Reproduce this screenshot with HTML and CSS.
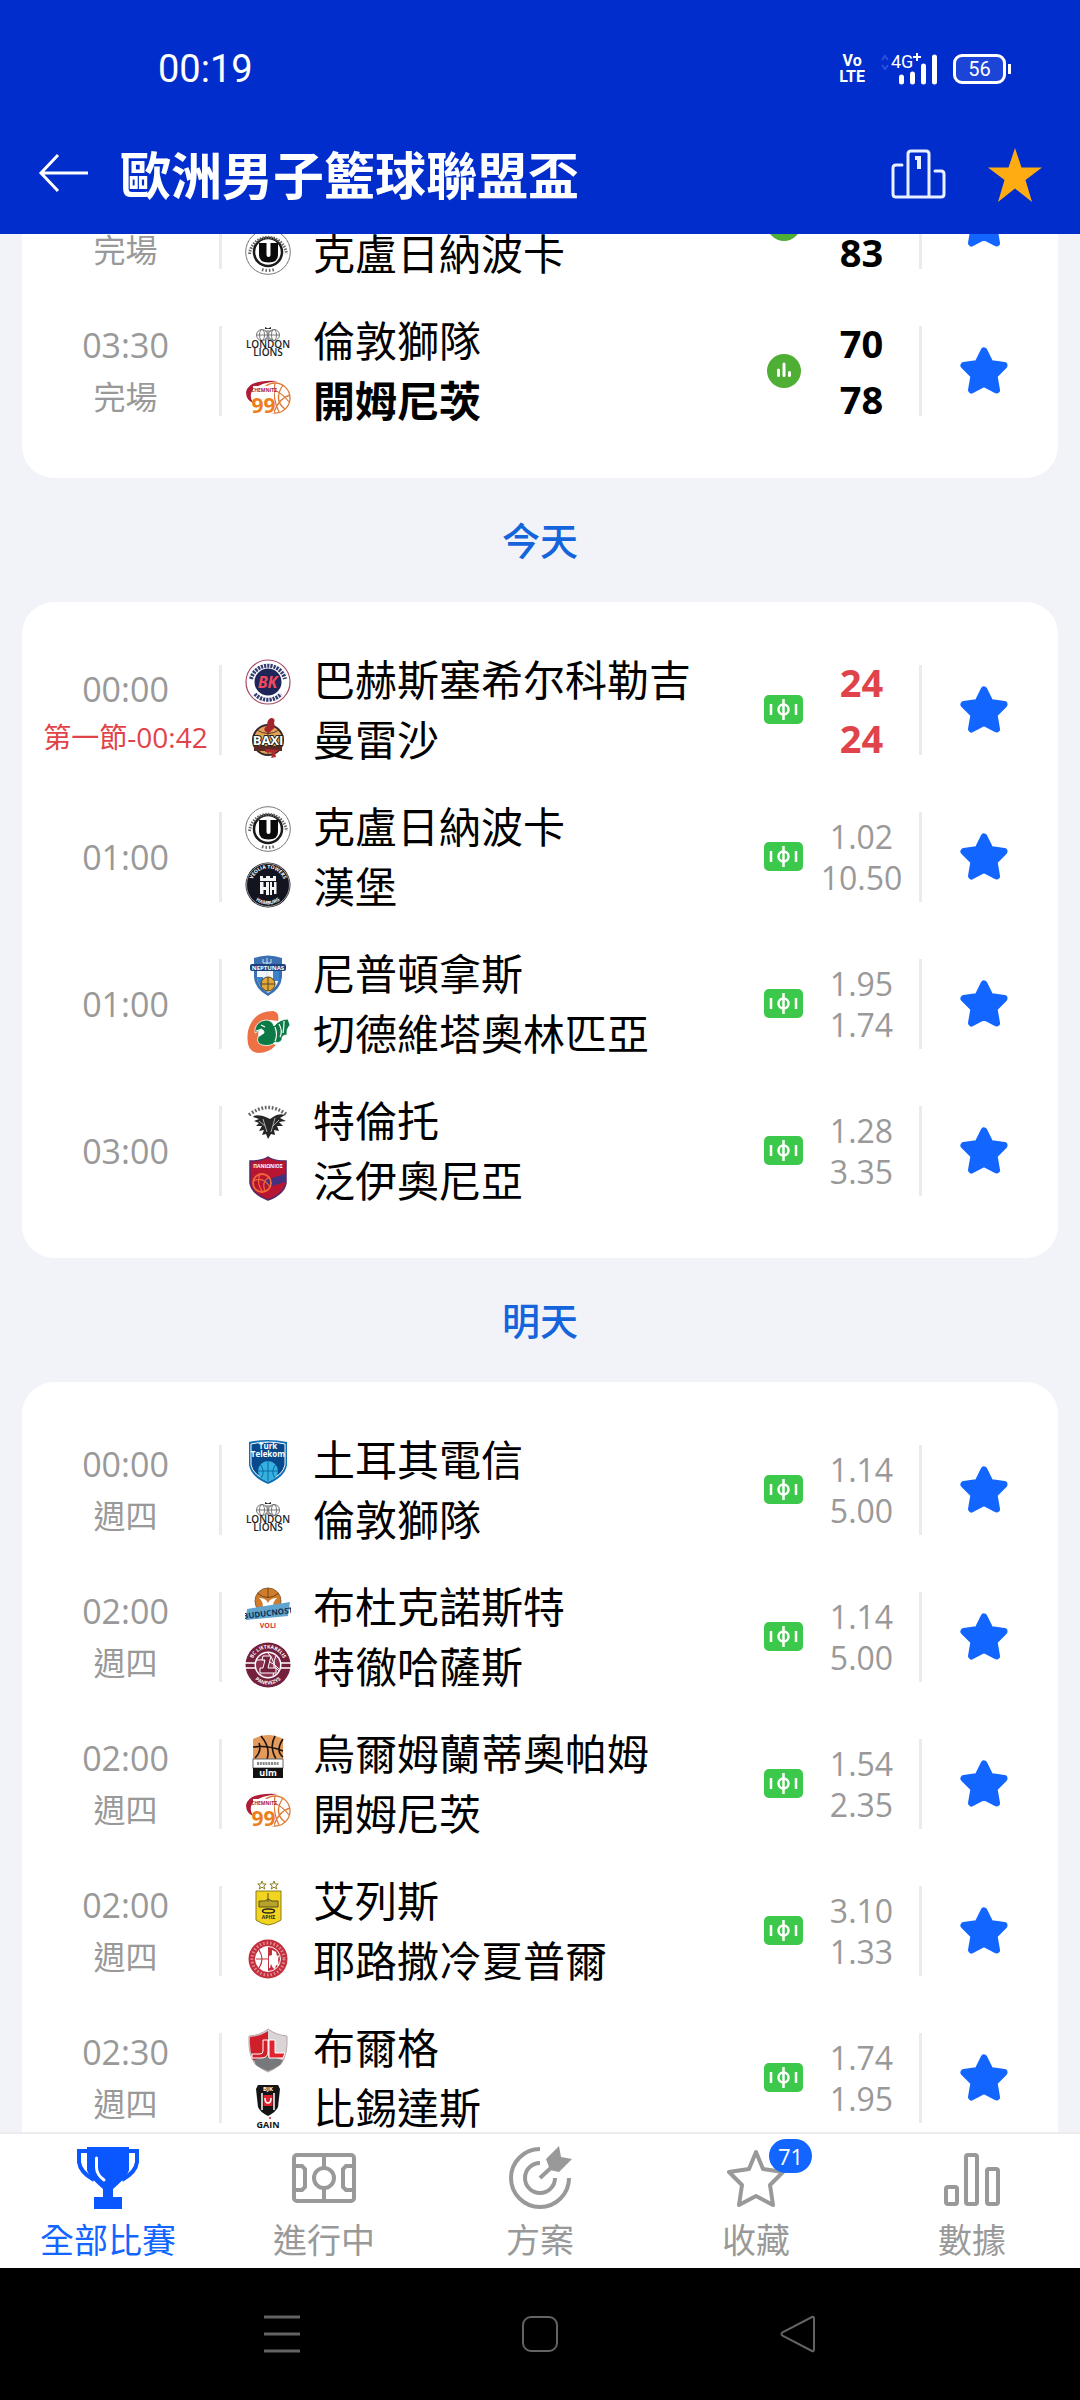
FILE: index.html
```html
<!DOCTYPE html>
<html lang="zh-Hant">
<head>
<meta charset="utf-8">
<meta name="viewport" content="width=device-width, initial-scale=1">
<title>歐洲男子籃球聯盟盃</title>
<link rel="stylesheet" href="styles.css">
</head>
<body>

<svg class="sprite" aria-hidden="true">
  <defs>
    <path id="ring-top" d="M6.5 23a16.5 16.5 0 0 1 33 0"/>
    <path id="ring-bottom" d="M3.5 23a19.5 19.5 0 0 0 39 0"/>

    <symbol id="star" viewBox="0 0 48 48">
      <path d="M24 4L30.200 16.500L44 18.500L34 28.500L36.500 43L24 36.500L11.500 43L14 28.500L4 18.500L17.800 16.500Z" fill="#1266ff" stroke="#1266ff" stroke-width="7" stroke-linejoin="round"/>
    </symbol>

    <symbol id="market" viewBox="0 0 39 29">
      <rect width="39" height="29" rx="5" fill="#3cc84a"/>
      <g fill="none" stroke="#fff" stroke-width="2.500">
        <circle cx="19.500" cy="14.500" r="5"/>
        <path d="M19.500 4V25M7 9V20M32 9V20"/>
      </g>
    </symbol>

    <symbol id="stats" viewBox="0 0 34 34">
      <circle cx="17" cy="17" r="17" fill="#4fae34"/>
      <path d="M11.500 16V21.500M17 10V21.500M22.500 18.500V21.500" stroke="#fff" stroke-width="3" stroke-linecap="round"/>
    </symbol>

    <symbol id="team-cluj" viewBox="0 0 46 46">
      <circle cx="23" cy="23" r="22.300" fill="#fff" stroke="#777" stroke-width="1"/>
      <circle cx="23" cy="23" r="14" fill="#fff" stroke="#1a1a1a" stroke-width="2.500"/>
      <path d="M14 14H21.500V26Q21.500 28 23.500 28T25.500 26V14H33V26Q33 33.500 23.500 33.500T14 26Z" fill="#0a0a0a"/>
      <g fill="none" stroke="#666" stroke-width="3">
        <path d="M4.500 25A18.600 18.600 0 0 1 41.500 25" stroke-dasharray="1.500 1.200"/>
        <path d="M17 40.500Q23 42.500 29 40.500" stroke-dasharray="1.500 2"/>
      </g>
    </symbol>

    <symbol id="team-london" viewBox="0 0 46 46">
      <g fill="none" stroke="#777" stroke-width="1">
        <circle cx="17" cy="15" r="5.500"/><circle cx="29" cy="15" r="5.500"/>
        <ellipse cx="17" cy="15" rx="2.500" ry="5.500"/><ellipse cx="29" cy="15" rx="2.500" ry="5.500"/>
        <path d="M12 15H34M20 11H27M20 19H27M23 11V20"/>
      </g>
      <path d="M20 7l3 1.500 3-1.500v2h-6z" fill="#222"/>
      <text x="23" y="28" class="t-london">LONDON</text>
      <text x="23" y="36" class="t-london">LIONS</text>
    </symbol>

    <symbol id="team-chemnitz" viewBox="0 0 46 46">
      <g fill="none" stroke="#dd7a35" stroke-width="1.300">
        <circle cx="30" cy="22" r="15"/>
        <path d="M30 7Q27 22 34 36M22 10Q38 17 44 26M45 19Q34 22 29 36M38 9Q28 24 40 33"/>
      </g>
      <path d="M33 5Q4 3 1 16Q1 24 8 27Q4 20 7 15Q13 7 33 5Z" fill="#b01c36"/>
      <rect x="8" y="10" width="21" height="27" fill="#fff"/>
      <text x="19" y="16" class="t-chem">CHEMNITZ</text>
      <text x="18.500" y="37" class="t-99">99</text>
    </symbol>

    <symbol id="team-bk" viewBox="0 0 46 46">
      <circle cx="23" cy="23" r="22" fill="#fff" stroke="#a74a66" stroke-width="1.200"/>
      <circle cx="23" cy="23" r="13.500" fill="#1d2559"/>
      <path d="M6 20A17.500 17.500 0 0 1 40 20M10 35A17.500 17.500 0 0 0 36 35" fill="none" stroke="#353c72" stroke-width="4" stroke-dasharray="2.200 1"/>
      <text x="22.500" y="29" class="t-bk">BK</text>
    </symbol>

    <symbol id="team-baxi" viewBox="0 0 46 46">
      <circle cx="23" cy="25" r="15" fill="#e3a357" stroke="#35272a" stroke-width="2"/>
      <path d="M23 10V40M12 15Q23 22 34 15M12 36Q23 29 34 36" fill="none" stroke="#5a3426"/>
      <path d="M21 17Q17 14 22 11Q22 4 26 3Q31 3 29 8Q31 13 27 15L24 18Z" fill="#a5232a"/>
      <rect x="9" y="31" width="28" height="5" fill="#5c2a22"/>
      <path d="M21 34L34 35L30 38L31 42L26 43L28 38L20 37Z" fill="#b52a30"/>
      <text x="23" y="30" class="t-baxi">BAXI</text>
    </symbol>

    <symbol id="team-towers" viewBox="0 0 46 46">
      <circle cx="23" cy="23" r="22.500" fill="#12151f"/>
      <circle cx="23" cy="23" r="21.500" fill="none" stroke="#bbb" stroke-width=".8"/>
      <text class="t-ring t-white"><textPath href="#ring-top" startOffset="50%">VEOLIA TOWERS</textPath></text>
      <text class="t-ring t-white"><textPath href="#ring-bottom" startOffset="50%">HAMBURG</textPath></text>
      <path d="M15 14h3v2h3v-2h4v2h3v-2h3v5H15zM15 20h3.500v5h2.500v-5h3v13h-3v-5h-2.500v4H15zM25 20h2v5h2v-5h2.500v12H29v-4h-2v5h-2z" fill="#f4f4f4"/>
    </symbol>

    <symbol id="team-neptunas" viewBox="0 0 46 46">
      <path d="M9 5Q23 0 37 5V24Q36 36 23 43Q10 36 9 24Z" fill="#3a6fb2"/>
      <path d="M12 18H34V25Q33 34 23 40Q13 34 12 25Z" fill="#f2f6fb"/>
      <path d="M12 24H18V33L23 40Q13 34 12 25ZM28 18H34V28H28Z" fill="#3a82cc"/>
      <path d="M22 5V25M18 6V10H26V6" stroke="#cfe0f2" fill="none"/>
      <rect x="5" y="11" width="36" height="7" rx="2" fill="#1d437f"/>
      <text x="23" y="17" class="t-nep">NEPTUNAS</text>
      <circle cx="23" cy="31" r="7" fill="#e1a83a" stroke="#5b4420"/>
      <path d="M23 24V38M16 31H30" stroke="#5b4420"/>
    </symbol>

    <symbol id="team-cedevita" viewBox="0 0 46 46">
      <path d="M28 2Q8 2 3 22Q0 43 13 44Q24 44 31 36L22 33Q16 37 14 31Q10 16 25 11L33 12Q35 3 28 2Z" fill="#ee7146"/>
      <path d="M10 20Q12 12 21 11Q27 11 29 17Q35 10 43 10L45 16Q41 20 42 26Q36 26 37 31Q34 35 30 33Q26 38 17 36Q11 34 13 28L19 24Q19 20 16 21L10 24Z" fill="#0c7a46" stroke="#fff" stroke-width=".8"/>
      <path d="M30 18Q33 26 30 32M34 15Q38 22 35 28M39 12Q39 19 38 24M16 16l4 2M11 22l6-2" stroke="#fff" stroke-width="1.200" fill="none"/>
    </symbol>

    <symbol id="team-aquila" viewBox="0 0 46 46">
      <path d="M4 15Q23 0 42 15" fill="none" stroke="#666" stroke-width="3.500" stroke-dasharray="1.800 1.700"/>
      <path d="M23 18L18 16Q10 14 8 17L14 19L9 21L14 23L11 26L17 26L14 31L19 30L17 35L21 34L23 39L26 34L30 35L29 30L34 31L32 26L38 26L34 22L41 21L35 18L40 15Q33 13 28 17L25 19Z" fill="#262626"/>
      <path d="M18 19L22 32M30 18L26 32M14 21l6 5M34 20l-6 6" stroke="#aaa" stroke-width="1"/>
    </symbol>

    <symbol id="team-panionios" viewBox="0 0 46 46">
      <path d="M5 5Q17 5 23 1Q29 5 41 5V27Q39 38 23 44Q7 38 5 27Z" fill="#b81533" stroke="#542a68" stroke-width="1.500"/>
      <path d="M17 25L40 18V26L24 31Z" fill="#43307f"/>
      <circle cx="17" cy="27" r="9" fill="none" stroke="#ef6938" stroke-width="1.800"/>
      <path d="M8 25Q18 20 25 31M15 18Q11 28 18 36M25 21Q16 25 20 35" fill="none" stroke="#ef6938" stroke-width="1.200"/>
      <text x="23" y="12" class="t-pan">ΠΑΝΙΩΝΙΟΣ</text>
    </symbol>

    <symbol id="team-telekom" viewBox="0 0 46 46">
      <path d="M4 3Q23 -1 42 3V26Q40 38 23 45Q6 38 4 26Z" fill="#0f6fb4"/>
      <path d="M6 5Q23 1 40 5V26Q38 36 23 42Q8 36 6 26Z" fill="#07498a" stroke="#fff" stroke-width="1"/>
      <circle cx="23" cy="32" r="10" fill="#35b0df"/>
      <path d="M23 22V42M13 32H33M15 25Q21 33 16 39M31 25Q25 33 30 39" fill="none" stroke="#0a6ba6"/>
      <text x="23" y="10" class="t-tt">Türk</text>
      <text x="23" y="18" class="t-tt">Telekom</text>
    </symbol>

    <symbol id="team-buducnost" viewBox="0 0 46 46">
      <circle cx="23" cy="15" r="13" fill="#cf7c2c" stroke="#8b6035"/>
      <path d="M12 7Q23 16 34 7M23 2V12" stroke="#704518" fill="none"/>
      <path d="M14 12Q21 12 23 17Q25 12 32 12Q28 15 28 21H18Q18 15 14 12Z" fill="#fff"/>
      <path d="M2 23L45 16L43 30L1 34Z" fill="#5fa3cf"/>
      <text x="23" y="30" class="t-bud" transform="rotate(-7 23 27)">BUDUCNOST</text>
      <text x="23" y="42" class="t-voli">VOLI</text>
    </symbol>

    <symbol id="team-lietkabelis" viewBox="0 0 46 46">
      <circle cx="23" cy="23" r="22.500" fill="#74203d"/>
      <path d="M0 21H46M0 26H46" stroke="#fff" stroke-width="1.300"/>
      <text class="t-ring t-white"><textPath href="#ring-top" startOffset="50%">BC LIETKABELIS</textPath></text>
      <text class="t-ring t-white"><textPath href="#ring-bottom" startOffset="50%">PANEVEZYS</textPath></text>
      <circle cx="23" cy="23" r="13.500" fill="#fff"/>
      <circle cx="23" cy="23" r="12" fill="#8b3150"/>
      <path d="M12 18Q24 16 34 27M23 11Q32 20 28 34M31 14Q26 23 34 29" fill="none" stroke="#fff"/>
      <path d="M18 14H26L23 26H31V31H15V26H18L20 18H17Z" fill="#74203d" stroke="#fff" stroke-width="1"/>
    </symbol>

    <symbol id="team-ulm" viewBox="0 0 46 46">
      <path d="M8 6Q23 -2 38 6V26H8Z" fill="#e49a5a"/>
      <path d="M16 3Q26 15 22 26M8 14Q24 12 38 18M10 25Q17 18 14 10M30 3Q24 14 31 26M38 6Q30 18 38 24" fill="none" stroke="#1a1410" stroke-width="1.600"/>
      <rect x="8" y="26" width="30" height="9" fill="#fff" stroke="#666"/>
      <path d="M12 30.500H34" stroke="#888" stroke-width="3" stroke-dasharray="2 .8"/>
      <rect x="8" y="35" width="30" height="10" fill="#111"/>
      <text x="23" y="43" class="t-ulm">ulm</text>
    </symbol>

    <symbol id="team-aris" viewBox="0 0 46 46">
      <path d="M17 1l1.200 3h3l-2.400 2 1 3-2.800-1.800L14.200 9l1-3-2.400-2h3zM29 1l1.200 3h3l-2.400 2 1 3-2.800-1.800L26.200 9l1-3-2.400-2h3z" fill="#fff" stroke="#8a7d1e" stroke-width="1"/>
      <path d="M11 11H36V40Q30 44 23.500 45Q16 44 11 40Z" fill="#f1d420" stroke="#8a7d1e"/>
      <path d="M23 13V22M14 21H20L23 19L27 21H33V27H14Z" fill="#b7a22a" stroke="#5b5220" stroke-width="1"/>
      <ellipse cx="23.500" cy="31" rx="6" ry="2" fill="none" stroke="#222" stroke-width="1.500"/>
      <text x="23.500" y="39" class="t-aris">ΑΡΗΣ</text>
    </symbol>

    <symbol id="team-hapoel" viewBox="0 0 46 46">
      <circle cx="23" cy="23" r="19.500" fill="#c32f3c"/>
      <circle cx="23" cy="23" r="16" fill="none" stroke="#e08a92" stroke-width="3" stroke-dasharray="1.500 2"/>
      <circle cx="23" cy="23" r="12.500" fill="#c32f3c" stroke="#fff" stroke-width="1"/>
      <path d="M23 10.500A12.500 12.500 0 0 0 23 35.500Z" fill="#fff"/>
      <path d="M11 23H23M14 14Q20 23 14 32" stroke="#c32f3c" stroke-width="1.200" fill="none"/>
      <path d="M27 14l4 2 1 4 2-1-1 5 1 6-3-1-1 4-2-1-2-4-1 4h-1V20l3-1z" fill="#fff"/>
    </symbol>

    <symbol id="team-bourg" viewBox="0 0 46 46">
      <path d="M4 9Q16 8 23 2Q31 8 42 9Q43 28 36 37Q30 42 23 45Q16 42 10 37Q3 28 4 9Z" fill="#d9d4d6" stroke="#b9a7aa"/>
      <path d="M5 10Q16 9 23 4V35L8 33Q4 22 5 10Z" fill="#cf1f2b"/>
      <path d="M9 33Q23 27 38 33L35 38Q29 42 23 44Q15 41 11 38Z" fill="#77787c"/>
      <path d="M18 13H23V25Q23 31 16 31H7V27H15Q18 27 18 24Z" fill="#cf1f2b" stroke="#fff"/>
      <path d="M24 13H30V26H40L38 31H24Z" fill="#e2222e" stroke="#fff"/>
    </symbol>

    <symbol id="team-besiktas" viewBox="0 0 46 46">
      <path d="M13 2H33L35 6L33 24Q31 29 23 33Q15 29 13 24L11 6Z" fill="#151515"/>
      <path d="M17 10V27M29 10V27" stroke="#fff" stroke-width="1.500"/>
      <rect x="18.500" y="12" width="9" height="11" fill="#d9232f"/>
      <path d="M20 15Q20 20 23 20T26 15" stroke="#fff" stroke-width="1.500" fill="none"/>
      <text x="23" y="8" class="t-bjk">BJK</text>
      <circle cx="25" cy="35" r="1" fill="#d9232f"/>
      <text x="23" y="45" class="t-gain">GAIN</text>
    </symbol>
  </defs>
</svg>

<header class="header">
  <div class="status">
    <span class="status-time">00:19</span>
    <div class="status-icons">
      <span class="volte">Vo<br>LTE</span>
      <svg class="signal" viewBox="0 0 56 32" aria-hidden="true">
        <path d="M1 7l3-4 3 4M1 12l3 4 3-4" fill="none" stroke="#2a50e0" stroke-width="2"/>
        <text x="10" y="15">4G</text>
        <path d="M36 0V8M32 4H40" stroke="#fff" stroke-width="2"/>
        <path d="M20.500 24V29M31.500 21V29M42.500 13V29M53.500 4V29" stroke="#fff" stroke-width="5" stroke-linecap="round"/>
      </svg>
      <span class="battery">56</span>
    </div>
  </div>
  <div class="toolbar">
    <button class="icon-button" type="button" aria-label="返回">
      <svg width="52" height="44" viewBox="0 0 52 44" aria-hidden="true"><path d="M20 2L3 20L20 38M3 20H50" fill="none" stroke="#fff" stroke-width="3"/></svg>
    </button>
    <h1 class="title">歐洲男子籃球聯盟盃</h1>
    <button class="icon-button" type="button" aria-label="排名">
      <svg width="56" height="52" viewBox="0 0 56 52" aria-hidden="true">
        <g fill="none" stroke="#e9f0ff" stroke-width="3" stroke-linejoin="round" stroke-linecap="round">
          <path d="M18 48V5Q18 2 21 2H36Q39 2 39 5V48M12 16H6Q3 16 3 19V45Q3 48 6 48H51Q54 48 54 45V25Q54 22 51 22H45"/>
          <path d="M25 9H29V20" stroke-width="4" stroke-linecap="butt" stroke-linejoin="miter"/>
        </g>
      </svg>
    </button>
    <button class="icon-button" type="button" aria-label="收藏聯賽">
      <svg width="54" height="54" viewBox="0 0 54 54" aria-hidden="true"><path d="M27 0L33.500 19.500H54L37.500 32L44 54L27 40.500L10 54L16.500 32L0 19.500H20.500Z" fill="#ffac12"/></svg>
    </button>
  </div>
</header>

<main class="scroller">
  <div class="feed">
    <ul class="card">
      <li class="match">
        <div class="when"><time></time><span>完場</span></div>
        <div class="logos"><svg></svg><svg><use href="#team-cluj"/></svg></div>
        <div class="teams"><span></span><span>克盧日納波卡</span></div>
        <svg class="stats"><use href="#stats"/></svg>
        <div class="score"><span></span><span>83</span></div>
        <button class="fav" type="button" aria-label="收藏"><svg><use href="#star"/></svg></button>
      </li>
      <li class="match">
        <div class="when"><time>03:30</time><span>完場</span></div>
        <div class="logos"><svg><use href="#team-london"/></svg><svg><use href="#team-chemnitz"/></svg></div>
        <div class="teams"><span>倫敦獅隊</span><span class="winner">開姆尼茨</span></div>
        <svg class="stats"><use href="#stats"/></svg>
        <div class="score"><span>70</span><span>78</span></div>
        <button class="fav" type="button" aria-label="收藏"><svg><use href="#star"/></svg></button>
      </li>
    </ul>

    <h2 class="day">今天</h2>
    <ul class="card">
      <li class="match">
        <div class="when when-live"><time>00:00</time><span>第一節-00:42</span></div>
        <div class="logos"><svg><use href="#team-bk"/></svg><svg><use href="#team-baxi"/></svg></div>
        <div class="teams"><span>巴赫斯塞希尔科勒吉</span><span>曼雷沙</span></div>
        <svg class="market"><use href="#market"/></svg>
        <div class="score score-live"><span>24</span><span>24</span></div>
        <button class="fav" type="button" aria-label="收藏"><svg><use href="#star"/></svg></button>
      </li>
      <li class="match">
        <div class="when"><time>01:00</time></div>
        <div class="logos"><svg><use href="#team-cluj"/></svg><svg><use href="#team-towers"/></svg></div>
        <div class="teams"><span>克盧日納波卡</span><span>漢堡</span></div>
        <svg class="market"><use href="#market"/></svg>
        <div class="odds"><span>1.02</span><span>10.50</span></div>
        <button class="fav" type="button" aria-label="收藏"><svg><use href="#star"/></svg></button>
      </li>
      <li class="match">
        <div class="when"><time>01:00</time></div>
        <div class="logos"><svg><use href="#team-neptunas"/></svg><svg><use href="#team-cedevita"/></svg></div>
        <div class="teams"><span>尼普頓拿斯</span><span>切德維塔奧林匹亞</span></div>
        <svg class="market"><use href="#market"/></svg>
        <div class="odds"><span>1.95</span><span>1.74</span></div>
        <button class="fav" type="button" aria-label="收藏"><svg><use href="#star"/></svg></button>
      </li>
      <li class="match">
        <div class="when"><time>03:00</time></div>
        <div class="logos"><svg><use href="#team-aquila"/></svg><svg><use href="#team-panionios"/></svg></div>
        <div class="teams"><span>特倫托</span><span>泛伊奧尼亞</span></div>
        <svg class="market"><use href="#market"/></svg>
        <div class="odds"><span>1.28</span><span>3.35</span></div>
        <button class="fav" type="button" aria-label="收藏"><svg><use href="#star"/></svg></button>
      </li>
    </ul>

    <h2 class="day">明天</h2>
    <ul class="card">
      <li class="match">
        <div class="when"><time>00:00</time><span>週四</span></div>
        <div class="logos"><svg><use href="#team-telekom"/></svg><svg><use href="#team-london"/></svg></div>
        <div class="teams"><span>土耳其電信</span><span>倫敦獅隊</span></div>
        <svg class="market"><use href="#market"/></svg>
        <div class="odds"><span>1.14</span><span>5.00</span></div>
        <button class="fav" type="button" aria-label="收藏"><svg><use href="#star"/></svg></button>
      </li>
      <li class="match">
        <div class="when"><time>02:00</time><span>週四</span></div>
        <div class="logos"><svg><use href="#team-buducnost"/></svg><svg><use href="#team-lietkabelis"/></svg></div>
        <div class="teams"><span>布杜克諾斯特</span><span>特徹哈薩斯</span></div>
        <svg class="market"><use href="#market"/></svg>
        <div class="odds"><span>1.14</span><span>5.00</span></div>
        <button class="fav" type="button" aria-label="收藏"><svg><use href="#star"/></svg></button>
      </li>
      <li class="match">
        <div class="when"><time>02:00</time><span>週四</span></div>
        <div class="logos"><svg><use href="#team-ulm"/></svg><svg><use href="#team-chemnitz"/></svg></div>
        <div class="teams"><span>烏爾姆蘭蒂奧帕姆</span><span>開姆尼茨</span></div>
        <svg class="market"><use href="#market"/></svg>
        <div class="odds"><span>1.54</span><span>2.35</span></div>
        <button class="fav" type="button" aria-label="收藏"><svg><use href="#star"/></svg></button>
      </li>
      <li class="match">
        <div class="when"><time>02:00</time><span>週四</span></div>
        <div class="logos"><svg><use href="#team-aris"/></svg><svg><use href="#team-hapoel"/></svg></div>
        <div class="teams"><span>艾列斯</span><span>耶路撒冷夏普爾</span></div>
        <svg class="market"><use href="#market"/></svg>
        <div class="odds"><span>3.10</span><span>1.33</span></div>
        <button class="fav" type="button" aria-label="收藏"><svg><use href="#star"/></svg></button>
      </li>
      <li class="match">
        <div class="when"><time>02:30</time><span>週四</span></div>
        <div class="logos"><svg><use href="#team-bourg"/></svg><svg><use href="#team-besiktas"/></svg></div>
        <div class="teams"><span>布爾格</span><span>比錫達斯</span></div>
        <svg class="market"><use href="#market"/></svg>
        <div class="odds"><span>1.74</span><span>1.95</span></div>
        <button class="fav" type="button" aria-label="收藏"><svg><use href="#star"/></svg></button>
      </li>
    </ul>
  </div>
</main>

<nav class="tabs">
  <a class="tab tab-active" href="#all" aria-current="page">
    <svg viewBox="0 0 64 64" aria-hidden="true">
      <path d="M11 5H3V16Q4 26 18 34M53 5H61V16Q60 26 46 34" fill="none" stroke="#0a57ff" stroke-width="4"/>
      <path d="M11 1H53V24Q52 30 37 43V51H46V63H18V51H27V43Q12 30 11 24Z" fill="#0a57ff"/>
      <path d="M20.500 12V22Q21 29 28 34" fill="none" stroke="#fff" stroke-width="3" stroke-linecap="round"/>
    </svg>
    <span>全部比賽</span>
  </a>
  <a class="tab" href="#live">
    <svg viewBox="0 0 64 64" aria-hidden="true">
      <g fill="none" stroke="#999" stroke-width="4">
        <rect x="2" y="9" width="60" height="46" rx="3"/>
        <path d="M32 9V55M2 20H10L13 23V41L10 44H2M62 20H54L51 23V41L54 44H62"/>
        <circle cx="32" cy="32" r="10" fill="#fff"/>
      </g>
    </svg>
    <span>進行中</span>
  </a>
  <a class="tab" href="#tips">
    <svg viewBox="0 0 64 64" aria-hidden="true">
      <g fill="none" stroke="#999" stroke-width="4">
        <path d="M32 3A29 29 0 1 0 61 32M32 17A15 15 0 1 0 47 32"/>
        <path d="M32 32L46 19"/>
      </g>
      <path d="M38 13L51 0L53 11L64 13L51 26L42 24Z" fill="#999"/>
    </svg>
    <span>方案</span>
  </a>
  <a class="tab" href="#favourites">
    <svg viewBox="0 0 64 64" aria-hidden="true">
      <path d="M32 6L39 23L59 26L46 39L49 59L32 50L15 59L18 39L5 26L25 23Z" fill="none" stroke="#999" stroke-width="4" stroke-linejoin="round"/>
    </svg>
    <span>收藏</span>
    <b class="badge">71</b>
  </a>
  <a class="tab" href="#data">
    <svg viewBox="0 0 64 64" aria-hidden="true">
      <g fill="none" stroke="#999" stroke-width="4">
        <rect x="6" y="41" width="11" height="17" rx="2"/>
        <rect x="26" y="9" width="11" height="49" rx="2"/>
        <rect x="47" y="23" width="11" height="35" rx="2"/>
      </g>
    </svg>
    <span>數據</span>
  </a>
</nav>

<footer class="system">
  <button class="icon-button" type="button" aria-label="最近">
    <svg width="38" height="38" viewBox="0 0 38 38" aria-hidden="true"><path d="M1 2H37M1 19H37M1 36H37" stroke="#636363" stroke-width="3"/></svg>
  </button>
  <button class="icon-button" type="button" aria-label="主畫面">
    <svg width="38" height="38" viewBox="0 0 38 38" aria-hidden="true"><rect x="2" y="2" width="34" height="34" rx="8" fill="none" stroke="#636363" stroke-width="2"/></svg>
  </button>
  <button class="icon-button" type="button" aria-label="上一頁">
    <svg width="38" height="38" viewBox="0 0 38 38" aria-hidden="true"><path d="M33 2Q35 1 35 4V34Q35 37 33 36L4 21Q1 19 4 17Z" fill="none" stroke="#636363" stroke-width="2"/></svg>
  </button>
</footer>

</body>
</html>
```
FILE: styles.css
```css
* {
  box-sizing: border-box;
}

body {
  display: flex;
  flex-direction: column;
  height: 100vh;
  margin: 0;
  background: #f1f3f8;
  color: #000;
  font-family: "Open Sans", "Noto Sans CJK TC", sans-serif;
}

h1,
h2,
ul {
  margin: 0;
  padding: 0;
}

ul {
  list-style: none;
}

button {
  padding: 0;
  border: 0;
  background: none;
}

svg {
  display: block;
}

.sprite {
  position: absolute;
  width: 0;
  height: 0;
}

.icon-button {
  display: flex;
}

/* Header */

.header {
  flex: none;
  background: #002dcc;
  color: #fff;
}

.status {
  display: flex;
  align-items: center;
  justify-content: space-between;
  height: 138px;
  padding: 0 69px 0 158px;
}

.status-time {
  font-family: Roboto, sans-serif;
  font-size: 38px;
  line-height: 44px;
}

.status-icons {
  display: flex;
  align-items: center;
  gap: 16px;
}

.volte {
  font-family: "Liberation Sans Narrow", Roboto, sans-serif;
  font-size: 16px;
  font-weight: 700;
  line-height: 16px;
  text-align: center;
}

.signal {
  width: 56px;
  height: 32px;
}

.signal text {
  fill: #fff;
  font-family: Roboto, sans-serif;
  font-size: 18px;
}

.battery {
  position: relative;
  width: 53px;
  height: 30px;
  margin-right: 5px;
  border: 3px solid #fff;
  border-radius: 9px;
  background: #1c44d6;
  font-family: Roboto, sans-serif;
  font-size: 20px;
  line-height: 24px;
  text-align: center;
}

.battery::after {
  content: "";
  position: absolute;
  top: 7px;
  right: -8px;
  width: 3px;
  height: 10px;
  background: #fff;
}

.toolbar {
  display: flex;
  align-items: center;
  gap: 42px;
  height: 96px;
  padding: 0 38px 22px 38px;
}

.title {
  flex: 1;
  margin-left: -12px;
  font-size: 51px;
  font-weight: 700;
  line-height: 74px;
}

/* Match list */

.scroller {
  flex: 1;
  min-height: 0;
  overflow: hidden;
}

/* The list is scrolled past its first rows */
.feed {
  margin-top: -118px;
  padding: 0 22px;
}

.card {
  padding: 34px 12px 34px 10px;
  border-radius: 32px;
  background: #fff;
}

.day {
  color: #1464dc;
  font-size: 38px;
  font-weight: 500;
  line-height: 124px;
  text-align: center;
}

.match {
  display: grid;
  grid-template-columns: 190px 69px 1fr 40px 115px 127px;
  align-items: center;
  height: 147px;
}

.when {
  display: flex;
  flex-direction: column;
  justify-content: center;
  height: 90px;
  border-right: 3px solid #ebebeb;
  color: #999;
  font-size: 32px;
  line-height: 52px;
  text-align: center;
}

.when time {
  min-height: 1lh;
  font-size: 34px;
}

.when-live {
  padding-top: 6px;
  line-height: 48px;
}

.when-live span {
  color: #e0434a;
  font-size: 28px;
  white-space: nowrap;
}

.logos {
  display: grid;
  justify-content: end;
  gap: 10px;
}

.logos svg {
  width: 46px;
  height: 46px;
}

.teams {
  display: grid;
  grid-auto-rows: 60px;
  padding-left: 22px;
  font-size: 42px;
  line-height: 60px;
  white-space: nowrap;
}

.winner {
  font-weight: 700;
}

.market {
  width: 39px;
  height: 29px;
}

.stats {
  justify-self: center;
  width: 34px;
  height: 34px;
}

.score,
.odds {
  display: grid;
  text-align: center;
}

.score {
  grid-auto-rows: 56px;
  font-size: 38px;
  font-weight: 700;
  line-height: 56px;
}

.score-live {
  color: #e0434a;
}

.odds {
  color: #999;
  font-size: 32px;
  line-height: 41px;
}

.fav {
  display: grid;
  place-items: center;
  height: 90px;
  border-left: 3px solid #ebebeb;
}

.fav svg {
  width: 48px;
  height: 48px;
}

/* Bottom tabs */

.tabs {
  display: grid;
  flex: none;
  grid-template-columns: repeat(5, 1fr);
  border-top: 2px solid #ececec;
  background: #fff;
}

.tab {
  position: relative;
  display: grid;
  justify-items: center;
  gap: 6px;
  padding: 12px 0 4px;
  color: #999;
  font-size: 34px;
  line-height: 48px;
  text-decoration: none;
}

.tab svg {
  width: 64px;
  height: 64px;
}

.tab-active {
  color: #1266ff;
}

.badge {
  position: absolute;
  top: 5px;
  left: 50%;
  width: 43px;
  margin-left: 13px;
  border-radius: 17px;
  background: #1266ff;
  color: #fff;
  font-size: 22px;
  font-weight: 400;
  line-height: 34px;
  text-align: center;
}

/* System navigation */

.system {
  display: flex;
  flex: none;
  align-items: center;
  justify-content: center;
  gap: 220px;
  height: 132px;
  background: #000;
}

/* Crest lettering */

symbol text {
  font-family: "Open Sans", sans-serif;
  font-weight: 700;
  text-anchor: middle;
}

.t-ring { font-size: 5px; }
.t-white { fill: #fff; }
.t-london { fill: #222; font-size: 10px; font-weight: 600; }
.t-chem { fill: #a0204a; font-size: 5px; }
.t-99 { fill: #ee7d1b; font-size: 21px; }
.t-bk { fill: #f24a5c; font-size: 16px; font-style: italic; }
.t-baxi { fill: #fff; font-size: 13px; stroke: #222; stroke-width: 2px; paint-order: stroke; }
.t-nep { fill: #fff; font-size: 6px; }
.t-pan { fill: #fff; font-size: 5px; }
.t-tt { fill: #fff; font-size: 8px; }
.t-bud { fill: #12304f; font-size: 8px; }
.t-voli { fill: #d8343a; font-size: 7px; }
.t-ulm { fill: #fff; font-size: 9px; }
.t-aris { fill: #222; font-size: 5px; }
.t-bjk { fill: #fff; font-size: 6px; }
.t-gain { fill: #111; font-size: 9px; }
```
